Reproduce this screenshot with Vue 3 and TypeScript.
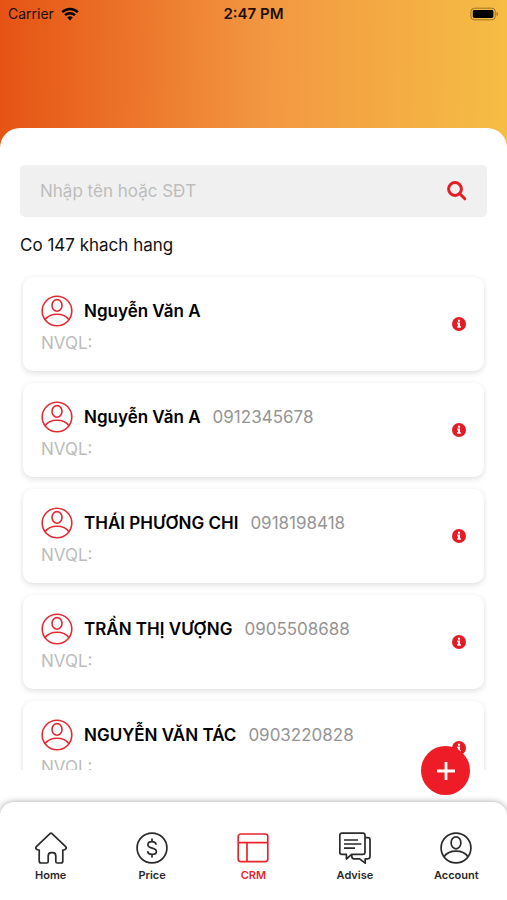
<script setup lang="ts">
import { computed, ref } from 'vue'

interface Customer {
  id: number
  name: string
  phone: string
}

interface Tab {
  key: string
  label: string
}

const customers: Customer[] = [
  { id: 1, name: 'Nguyễn Văn A', phone: '' },
  { id: 2, name: 'Nguyễn Văn A', phone: '0912345678' },
  { id: 3, name: 'THÁI PHƯƠNG CHI', phone: '0918198418' },
  { id: 4, name: 'TRẦN THỊ VƯỢNG', phone: '0905508688' },
  { id: 5, name: 'NGUYỄN VĂN TÁC', phone: '0903220828' },
]

const tabs: Tab[] = [
  { key: 'home', label: 'Home' },
  { key: 'price', label: 'Price' },
  { key: 'crm', label: 'CRM' },
  { key: 'advise', label: 'Advise' },
  { key: 'account', label: 'Account' },
]

const total = 147
const activeTab = ref('crm')
const query = ref('')

const visibleCustomers = computed(() => {
  const q = query.value.trim().toLowerCase()
  return customers.filter((c) => c.name.toLowerCase().includes(q) || c.phone.includes(q))
})
</script>

<template>
  <div class="screen">
    <header class="status">
      <div class="carrier">
        <span>Carrier</span>
        <svg class="wifi" viewBox="0 0 18 14" aria-hidden="true">
          <path d="M1.2 5.2a11.2 11.2 0 0 1 15.6 0" />
          <path d="M4 8.2a7.2 7.2 0 0 1 10 0" />
          <path class="wifi-dot" d="M6.2 10.4a4.2 4.2 0 0 1 5.6 0L9 13.6z" />
        </svg>
      </div>
      <time class="clock">2:47 PM</time>
      <svg class="battery" viewBox="0 0 31 14" aria-hidden="true">
        <rect class="battery-case" x="1" y="0.8" width="26" height="12.4" rx="3.6" />
        <rect x="3" y="2.8" width="22" height="8.4" rx="1.6" />
        <path class="battery-tip" d="M28.4 4.8c2 .6 2 3.8 0 4.4z" />
      </svg>
    </header>

    <main class="panel">
      <form class="search" role="search" @submit.prevent>
        <input v-model="query" type="text" aria-label="Nhập tên hoặc SĐT" placeholder="Nhập tên hoặc SĐT" />
        <button type="submit" aria-label="Search">
          <svg viewBox="0 0 20 20" aria-hidden="true">
            <circle cx="8" cy="8" r="6.4" />
            <path d="M12.8 12.8l5 5" />
          </svg>
        </button>
      </form>

      <p class="count">Co {{ total }} khach hang</p>

      <ul class="list">
        <li v-for="c in visibleCustomers" :key="c.id" class="card">
          <div class="details">
            <div class="person">
              <svg class="avatar" viewBox="0 0 32 32" aria-hidden="true">
                <circle cx="16" cy="16" r="14.8" />
                <ellipse cx="16" cy="10.4" rx="5" ry="5.8" />
                <path d="M4 24.800c2.600-3.800 6.600-5.600 12-5.600s9.400 1.800 12 5.600" />
              </svg>
              <span class="name">{{ c.name }}</span>
              <span v-if="c.phone" class="phone">{{ c.phone }}</span>
            </div>
            <div class="manager">NVQL:</div>
          </div>
          <button type="button" class="info" :aria-label="c.name">
            <svg viewBox="0 0 16 16" aria-hidden="true">
              <circle cx="8" cy="8" r="8" />
              <path d="M6.800 3.200h2.400v2.200H6.800zM6 6.400h3.200v4h.8v2H6v-2h.8V8.200H6z" />
            </svg>
          </button>
        </li>
      </ul>
    </main>

    <div class="bottom">
      <button type="button" class="add" aria-label="Add">
        <svg viewBox="0 0 20 20" aria-hidden="true"><path d="M10 1v18M1 10h18" /></svg>
      </button>
      <nav class="tabs">
        <a
          v-for="t in tabs"
          :key="t.key"
          :href="'#' + t.key"
          class="tab"
          :class="{ active: activeTab === t.key }"
          @click.prevent="activeTab = t.key"
        >
          <svg viewBox="0 0 32 32" aria-hidden="true">
            <g v-if="t.key === 'home'">
              <path d="M15 1.700q1-1 2 0L30.400 14.300q1.200 1.200.6 2.400-.6 1.300-2.400 1.300h-.8v11q0 2-2 2h-3.400q-1.600 0-1.600-1.600V24q0-3.400-3-3.400h-1.600q-3 0-3 3.400v5.400q0 1.600-1.600 1.600H6.200q-2 0-2-2V18h-.8q-1.800 0-2.400-1.300-.6-1.200.6-2.400z" />
            </g>
            <g v-else-if="t.key === 'price'">
              <circle cx="16" cy="16" r="14.900" />
              <path d="M16 6.600v3M16 22.400v3M20.200 12.600c-.4-2-2-3-4.200-3-2.500 0-4.100 1.200-4.100 3.200 0 4.400 8.500 2.200 8.500 6.600 0 2-1.700 3-4.400 3s-4.200-1.200-4.400-3.200" />
            </g>
            <g v-else-if="t.key === 'crm'">
              <rect x="1.200" y="2" width="29.600" height="27.600" rx="2.600" />
              <path d="M1.200 10.600h29.600M10 10.600v19" />
            </g>
            <g v-else-if="t.key === 'advise'">
              <path d="M3 1.200h20.800q2.200 0 2.200 2.200v16.800q0 2.200-2.200 2.200H12.600L7.400 27v-4.600H3q-2.200 0-2.200-2.200V3.400Q.8 1.200 3 1.200z" />
              <path d="M26 5.600h2.800q2.200 0 2.200 2.200v16.800q0 2.200-2.200 2.200h-2.600v4.400l-5.600-4.400h-5.600q-2 0-2.200-2.200v-2.200" />
              <path d="M5 8h14M5 12h17.400M5 16.200h11" />
            </g>
            <g v-else>
              <circle cx="16" cy="16" r="14.900" />
              <ellipse cx="16" cy="10.800" rx="4.900" ry="6" />
              <path d="M4 24.800c2.600-3.800 6.600-5.600 12-5.600s9.400 1.800 12 5.600" />
            </g>
          </svg>
          <span>{{ t.label }}</span>
        </a>
      </nav>
    </div>
  </div>
</template>

<style>
body {
  margin: 0;
}
</style>

<style scoped>
.screen {
  display: flex;
  flex-direction: column;
  height: 100vh;
  background: linear-gradient(91deg, #e65314 0%, #f29842 53%, #f6bd44 100%) top / 100% 160px no-repeat #fff;
  font-family: Inter, "Liberation Sans", sans-serif;
  color: #111;
  overflow: hidden;
}

.status {
  display: grid;
  grid-template-columns: 1fr auto 1fr;
  align-items: center;
  height: 27px;
  margin-bottom: 101px;
  padding: 0 8px;
  font-size: 14px;
  color: #1c0e04;
}

.carrier {
  display: flex;
  align-items: center;
  gap: 7px;
}

.wifi {
  width: 18px;
  height: 14px;
  fill: none;
  stroke: #000;
  stroke-width: 2.4;
}

.wifi-dot {
  fill: #000;
  stroke: none;
}

.clock {
  font-size: 15px;
  font-weight: 600;
}

.battery {
  justify-self: end;
  width: 29px;
  height: 14px;
}

.battery-case {
  fill: none;
  stroke: rgba(60, 40, 0, 0.5);
}

.battery-tip {
  fill: rgba(60, 40, 0, 0.5);
}

.panel {
  display: flex;
  flex: 1;
  flex-direction: column;
  min-height: 0;
  padding: 37px 20px 32px;
  border-radius: 20px 20px 0 0;
  background: #fff;
}

.search {
  display: flex;
  flex: none;
  align-items: center;
  height: 52px;
  padding: 0 20px;
  border-radius: 5px;
  background: #f0f0f0;
}

.search input {
  flex: 1;
  min-width: 0;
  padding: 0;
  border: 0;
  outline: 0;
  background: none;
  font: inherit;
  font-size: 17px;
  color: #111;
}

.search input::placeholder {
  color: #bdbdbd;
  opacity: 1;
}

button {
  padding: 0;
  border: 0;
  background: none;
  cursor: pointer;
}

.search button,
.search svg {
  display: block;
  width: 20px;
  height: 20px;
}

.search svg {
  fill: none;
  stroke: #e31c25;
  stroke-width: 3;
  stroke-linecap: round;
}

.count {
  margin: 18px 0 19px;
  font-size: 17px;
  line-height: 20px;
}

.list {
  display: flex;
  flex: 1;
  flex-direction: column;
  gap: 12px;
  min-height: 0;
  margin: 0;
  padding: 3px;
  overflow: hidden;
  list-style: none;
}

.card {
  display: flex;
  flex: none;
  align-items: center;
  justify-content: space-between;
  box-sizing: border-box;
  height: 94px;
  padding: 0 18px;
  border-radius: 10px;
  background: #fff;
  box-shadow: 0 2px 6px rgba(0, 0, 0, 0.13);
}

.person {
  display: flex;
  align-items: center;
  font-size: 17px;
  line-height: 20px;
}

.avatar {
  width: 32px;
  height: 32px;
  margin-right: 11px;
  fill: none;
  stroke: #e32b33;
  stroke-width: 1.6;
}

.name {
  font-weight: 600;
  color: #000;
}

.phone {
  margin-left: 12px;
  color: #949494;
}

.manager {
  margin-top: 6px;
  font-size: 17px;
  line-height: 20px;
  color: #bcbcbc;
}

.info,
.info svg {
  display: block;
  width: 14px;
  height: 14px;
}

.info circle {
  fill: #e31b25;
}

.info path {
  fill: #fff;
}

.bottom {
  position: relative;
  flex: none;
}

.add {
  position: absolute;
  right: 37px;
  bottom: calc(100% + 7px);
  z-index: 1;
  display: grid;
  place-items: center;
  width: 49px;
  height: 49px;
  border-radius: 50%;
  background: #ee1c27;
}

.add svg {
  width: 20px;
  height: 20px;
  stroke: #fff;
  stroke-width: 2.8;
}

.tabs {
  display: grid;
  grid-template-columns: repeat(5, 1fr);
  box-sizing: border-box;
  height: 98px;
  padding-top: 30px;
  border-radius: 14px 14px 0 0;
  background: #fff;
  box-shadow: 0 0 6px rgba(0, 0, 0, 0.36);
}

.tab {
  display: flex;
  flex-direction: column;
  align-items: center;
  gap: 4px;
  font-size: 11px;
  font-weight: 600;
  line-height: 14px;
  color: #2a2a2a;
  text-decoration: none;
}

.tab svg {
  width: 32px;
  height: 32px;
  fill: none;
  stroke: currentColor;
  stroke-width: 1.7;
  stroke-linejoin: round;
}

.tab.active {
  color: #e8252f;
}
</style>
